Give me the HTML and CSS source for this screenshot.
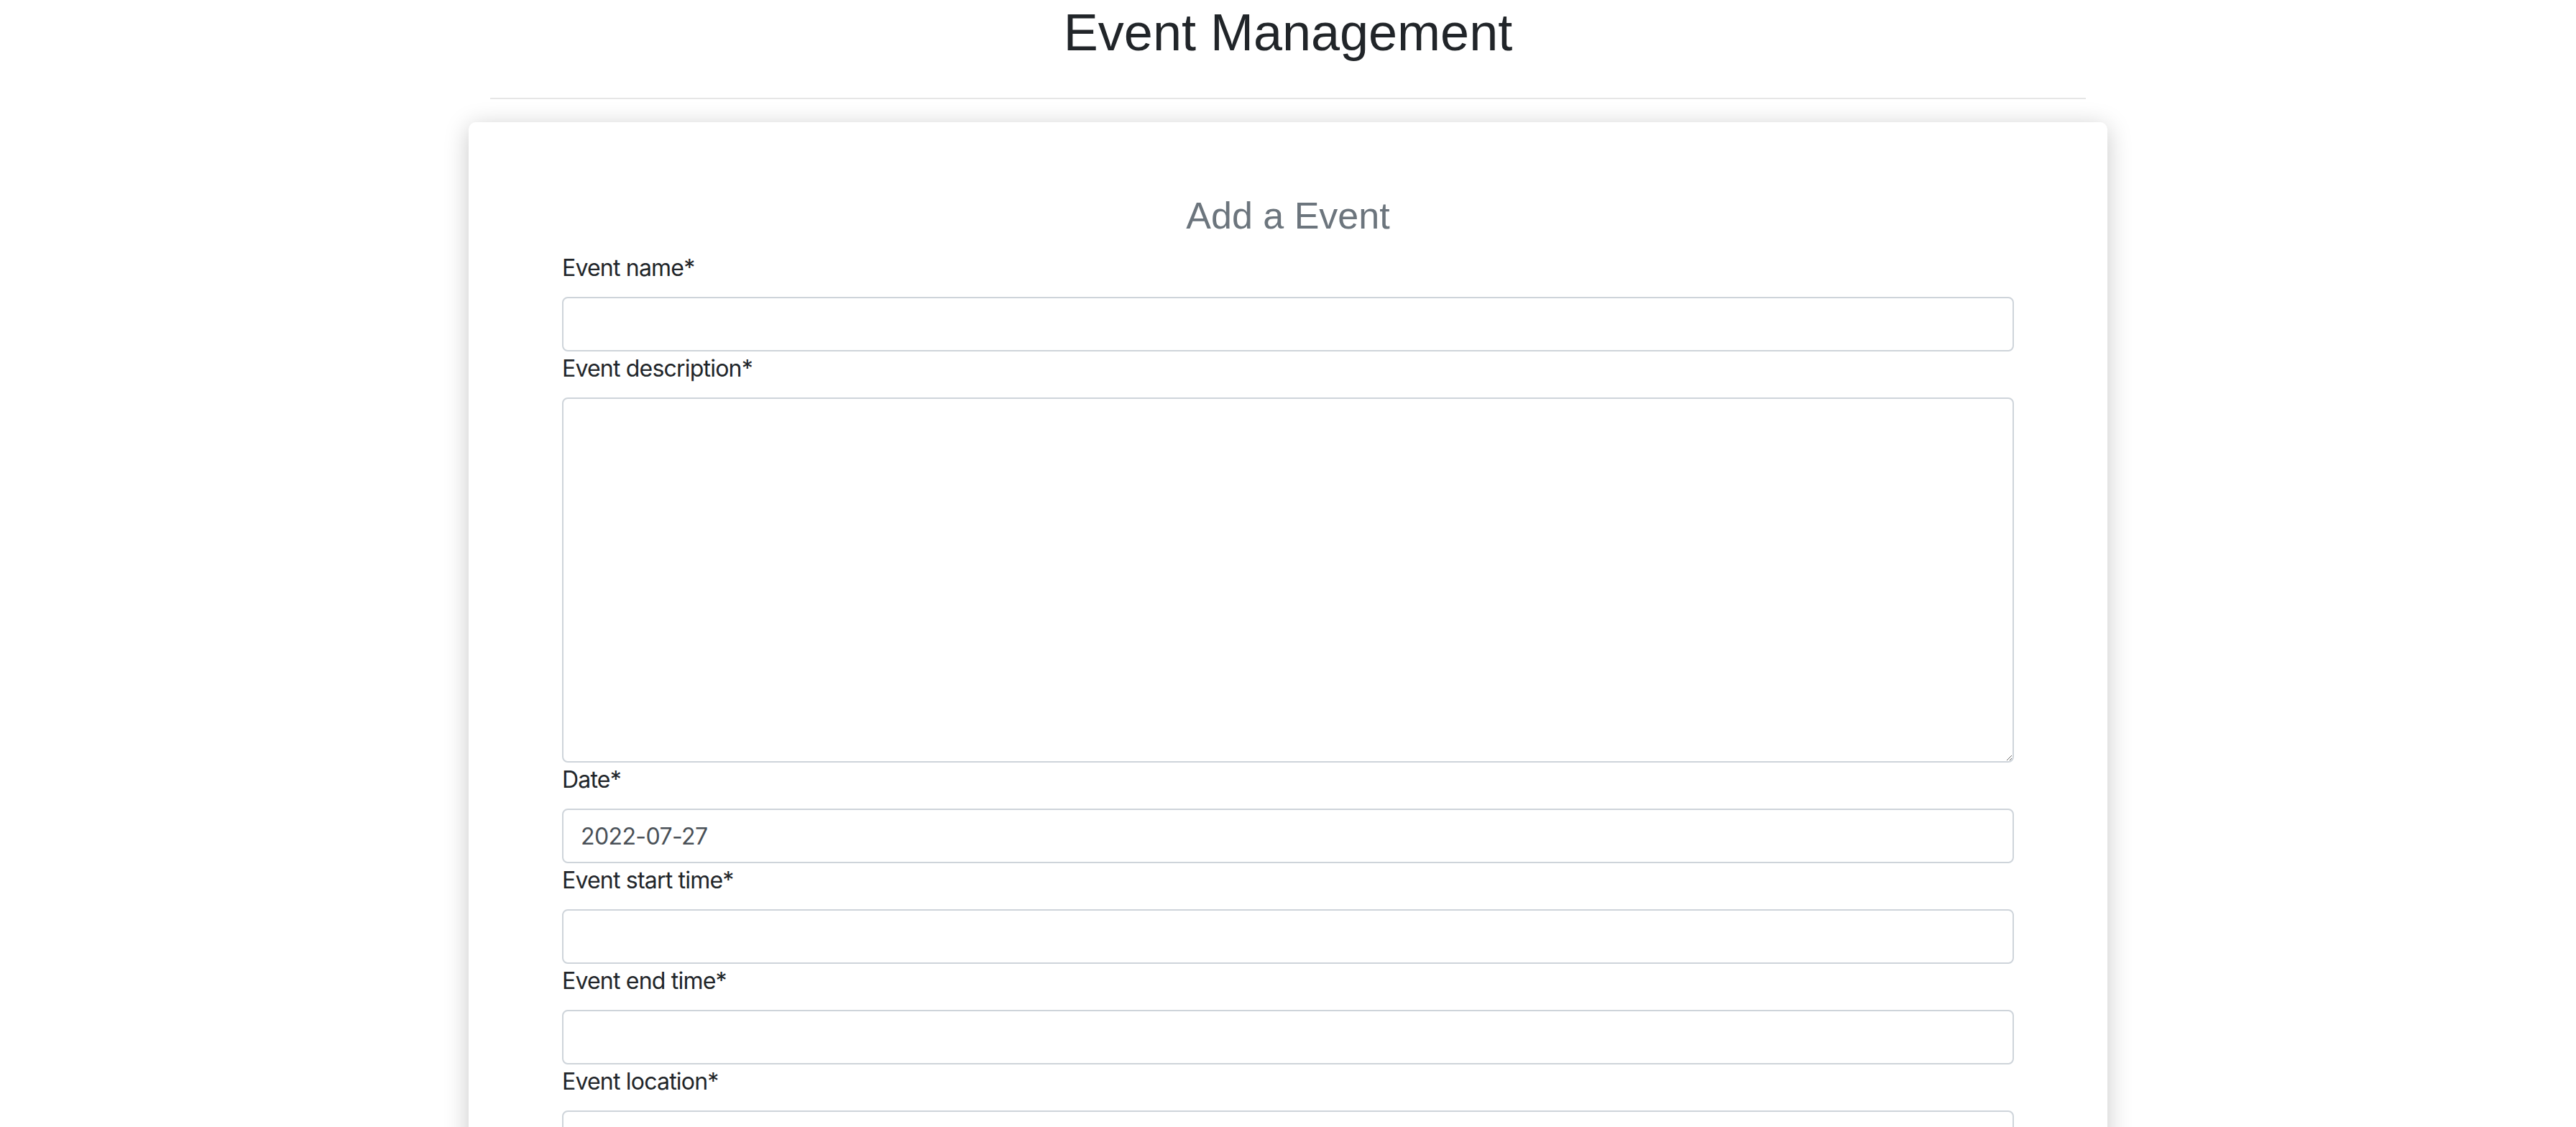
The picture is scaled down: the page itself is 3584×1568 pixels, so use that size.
FILE: index.html
```html
<!DOCTYPE html>
<html lang="en">
<head>
<meta charset="utf-8">
<title>Event Management</title>
<link rel="stylesheet" href="styles.css">
</head>
<body>
<header class="page-header">
  <h1 class="page-title">Event Management</h1>
  <hr class="divider">
</header>
<main class="card">
  <h3 class="card-title">Add a Event</h3>
  <form class="event-form">
    <label class="field-label" for="name">Event name*</label>
    <input class="field-input" id="name" type="text">
    <label class="field-label" for="desc">Event description*</label>
    <textarea class="field-input field-textarea" id="desc" rows="10"></textarea>
    <label class="field-label" for="date">Date*</label>
    <input class="field-input" id="date" type="text" value="2022-07-27">
    <label class="field-label" for="start">Event start time*</label>
    <input class="field-input" id="start" type="text">
    <label class="field-label" for="end">Event end time*</label>
    <input class="field-input" id="end" type="text">
    <label class="field-label" for="loc">Event location*</label>
    <input class="field-input" id="loc" type="text">
  </form>
</main>
</body>
</html>
```
FILE: styles.css
```css
html, body {
  margin: 0;
  padding: 0;
  background: #ffffff;
}
body {
  font-family: Inter, "Noto Sans", "DejaVu Sans", sans-serif;
  color: #212529;
  padding-bottom: 120px;
}
.page-header {
  width: 2220px;
  margin: 0 auto;
}
.page-title {
  margin: 2px 0 0;
  font-family: "Liberation Sans", Arial, sans-serif;
  font-weight: 400;
  font-size: 72px;
  line-height: 86px;
  text-align: center;
  color: #212529;
}
.divider {
  margin: 48px 0 0;
  border: 0;
  border-top: 2px solid #e6e6e6;
  height: 0;
}
.card {
  display: block;
  width: 2280px;
  box-sizing: border-box;
  margin: 32px auto 0;
  padding: 99px 130px 96px;
  background: #ffffff;
  border-radius: 10px;
  box-shadow: 0 6px 34px rgba(0, 0, 0, 0.22);
}
.card-title {
  margin: 0 0 18px;
  font-family: "Liberation Sans", Arial, sans-serif;
  font-weight: 400;
  font-size: 52px;
  line-height: 62px;
  text-align: center;
  color: #6c757d;
}
.event-form {
  display: flex;
  flex-direction: column;
}
.field-label {
  display: block;
  font-size: 32px;
  line-height: 48px;
  margin-bottom: 16px;
  color: #212529;
  letter-spacing: -0.8px;
}
.field-input {
  display: block;
  box-sizing: border-box;
  width: 100%;
  height: 76px;
  margin: 0;
  padding: 12px 24px;
  font-family: Inter, "Noto Sans", sans-serif;
  font-size: 32px;
  line-height: 48px;
  color: #495057;
  background: #ffffff;
  border: 2px solid #ced4da;
  border-radius: 8px;
  outline: none;
  letter-spacing: -0.6px;
}
.field-textarea {
  height: 508px;
  resize: vertical;
}
```
